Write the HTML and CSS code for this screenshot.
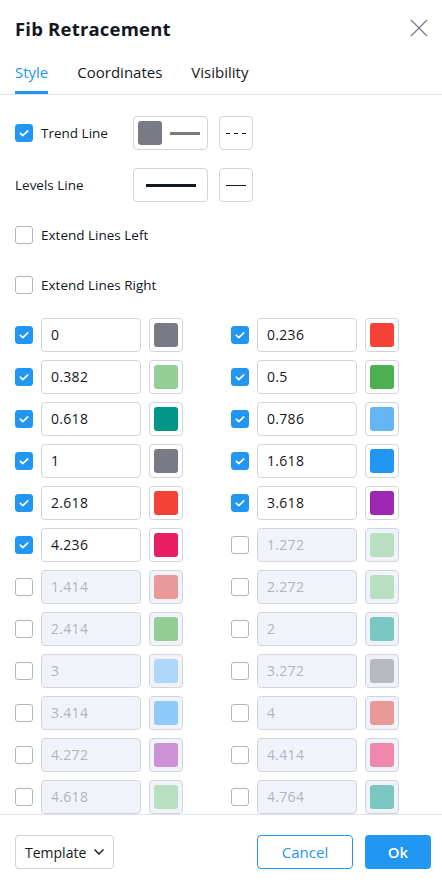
FILE: index.html
```html
<!DOCTYPE html>
<html lang="en">
<head>
  <meta charset="UTF-8" />
  <meta name="viewport" content="width=device-width, initial-scale=1.0" />
  <title>Fib Retracement</title>
  <link rel="stylesheet" href="styles.css">
</head>
<body>
  <div class="dialog">
    <!-- Header -->
    <div class="header">
      <h1>Fib Retracement</h1>
      <span class="close">
        <svg width="18" height="18" viewBox="0 0 18 18"><path d="M1 1L17 17M17 1L1 17" stroke="#787b86" stroke-width="1.3" fill="none"/></svg>
      </span>
    </div>
    <div class="tabs">
      <span class="tab active">Style</span>
      <span class="tab">Coordinates</span>
      <span class="tab">Visibility</span>
    </div>

    <!-- Body -->
    <div class="content">
      <div class="row first">
        <label class="check-label"><span class="cb on"></span>Trend Line</label>
        <div class="btn line-btn">
          <span class="swatch" style="background:#787b86"></span>
          <span class="stroke gray"></span>
        </div>
        <div class="btn sq-btn"><span class="dashes"></span></div>
      </div>

      <div class="row">
        <label class="check-label plain">Levels Line</label>
        <div class="btn line-btn center"><span class="stroke thick"></span></div>
        <div class="btn sq-btn"><span class="thin"></span></div>
      </div>

      <div class="row">
        <label class="check-label"><span class="cb"></span>Extend Lines Left</label>
      </div>

      <div class="row">
        <label class="check-label"><span class="cb"></span>Extend Lines Right</label>
      </div>

      <div class="levels" id="levels"></div>
    </div>

    <!-- Footer -->
    <div class="footer">
      <div class="template">Template
        <svg width="12" height="8" viewBox="0 0 12 8"><path d="M1.5 1.5L6 6L10.5 1.5" stroke="#131722" stroke-width="1.4" fill="none"/></svg>
      </div>
      <div class="spacer"></div>
      <button class="cancel">Cancel</button>
      <button class="ok">Ok</button>
    </div>
  </div>

  <script>
    const levels = [
      ["0", "#787b86", true], ["0.236", "#f44336", true],
      ["0.382", "#93cf96", true], ["0.5", "#4caf50", true],
      ["0.618", "#009688", true], ["0.786", "#64b5f6", true],
      ["1", "#787b86", true], ["1.618", "#2196f3", true],
      ["2.618", "#f44336", true], ["3.618", "#9c27b0", true],
      ["4.236", "#e91e63", true], ["1.272", "#b9dfc1", false],
      ["1.414", "#e99a98", false], ["2.272", "#b9dfc1", false],
      ["2.414", "#94cc96", false], ["2", "#7ac6c0", false],
      ["3", "#afd7fb", false], ["3.272", "#b8babf", false],
      ["3.414", "#90caf9", false], ["4", "#e99a98", false],
      ["4.272", "#cd91d8", false], ["4.414", "#f088ad", false],
      ["4.618", "#b9dfc1", false], ["4.764", "#7ac6c0", false]
    ];
    const box = document.getElementById("levels");
    levels.forEach(l => {
      const item = document.createElement("div");
      item.className = "level" + (l[2] ? "" : " off");
      item.innerHTML =
        '<span class="cb' + (l[2] ? ' on' : '') + '"></span>' +
        '<div class="value">' + l[0] + '</div>' +
        '<div class="btn sq-btn"><span class="swatch" style="background:' + l[1] + '"></span></div>';
      box.appendChild(item);
    });
  </script>
</body>
</html>
```

FILE: styles.css
```css
* { margin: 0; padding: 0; box-sizing: border-box; }
body {
  font-family: "Open Sans", Arial, sans-serif;
  color: #131722;
  background: #fff;
}
.dialog {
  width: 442px;
  height: 890px;
  display: flex;
  flex-direction: column;
}
.header {
  display: flex;
  align-items: center;
  justify-content: space-between;
  padding: 0 15px;
  height: 56px;
}
.header h1 {
  font-size: 18.5px;
  font-weight: 700;
  letter-spacing: 0.2px;
}
.close { display: flex; margin-right: -1px; }
.tabs {
  display: flex;
  gap: 29px;
  padding: 0 15px;
  border-bottom: 1px solid #e0e3eb;
  height: 39px;
}
.tab {
  font-size: 15px;
  line-height: 33px;
  color: #131722;
}
.tab.active {
  color: #2196f3;
  border-bottom: 3px solid #2196f3;
}
.content {
  height: 720px;
  overflow: hidden;
  padding: 21px 15px 0 15px;
  border-bottom: 1px solid #e0e3eb;
}
.row {
  display: flex;
  align-items: center;
  height: 34px;
  margin-bottom: 16px;
}
.row.first { margin-bottom: 18px; }
.check-label {
  display: flex;
  align-items: center;
  gap: 8px;
  width: 118px;
  font-size: 13.5px;
  white-space: nowrap;
}
.cb {
  width: 18px;
  height: 18px;
  border: 1px solid #b2b5be;
  border-radius: 3px;
  flex: none;
  display: inline-block;
  background: #fff;
}
.cb.on {
  background: #2196f3 url("data:image/svg+xml,%3Csvg xmlns='http://www.w3.org/2000/svg' width='18' height='18'%3E%3Cpath d='M5.2 9.2l2.6 2.4L12.8 6.8' stroke='white' stroke-width='1.6' fill='none' stroke-linecap='round' stroke-linejoin='round'/%3E%3C/svg%3E") center no-repeat;
  border-color: #2196f3;
}
.btn {
  height: 34px;
  border: 1px solid #d1d4dc;
  border-radius: 4px;
  display: flex;
  align-items: center;
  background: #fff;
}
.line-btn {
  width: 75px;
  padding: 0 4px;
  gap: 8px;
}
.line-btn.center { justify-content: center; }
.sq-btn {
  width: 34px;
  justify-content: center;
  margin-left: 11px;
}
.swatch {
  width: 24px;
  height: 24px;
  border-radius: 3px;
  display: block;
}
.stroke { display: block; height: 3px; width: 30px; }
.stroke.gray { background: #787b86; }
.stroke.thick { background: #131722; width: 50px; }
.thin { display: block; width: 20px; height: 1px; background: #131722; }
.dashes {
  display: block;
  width: 20px;
  height: 1px;
  background: repeating-linear-gradient(to right, #131722 0 4px, transparent 4px 8px);
}
.levels {
  display: grid;
  grid-template-columns: 216px 180px;
  row-gap: 8px;
}
.level {
  display: flex;
  align-items: center;
  height: 34px;
}
.level .cb { margin-right: 8px; }
.value {
  width: 100px;
  height: 34px;
  border: 1px solid #d1d4dc;
  border-radius: 4px;
  font-size: 14px;
  line-height: 32px;
  padding-left: 9px;
  letter-spacing: 0.3px;
}
.level .sq-btn { margin-left: 8px; }
.level.off .value,
.level.off .sq-btn {
  background: #f0f3fa;
  color: #b2b5be;
}
.footer {
  display: flex;
  align-items: center;
  padding: 20px 11px 0 15px;
}
.template {
  width: 99px;
  height: 34px;
  border: 1px solid #d1d4dc;
  border-radius: 4px;
  display: flex;
  align-items: center;
  justify-content: space-between;
  padding: 0 8px 0 9px;
  font-size: 14px;
}
.spacer { flex: 1; }
button {
  height: 34px;
  border-radius: 4px;
  font-family: inherit;
  font-size: 15px;
  cursor: pointer;
}
.cancel {
  width: 96px;
  background: #fff;
  border: 1px solid #2196f3;
  color: #2196f3;
  margin-right: 12px;
}
.ok {
  width: 66px;
  background: #2196f3;
  border: none;
  color: #fff;
  font-weight: 600;
}
```
